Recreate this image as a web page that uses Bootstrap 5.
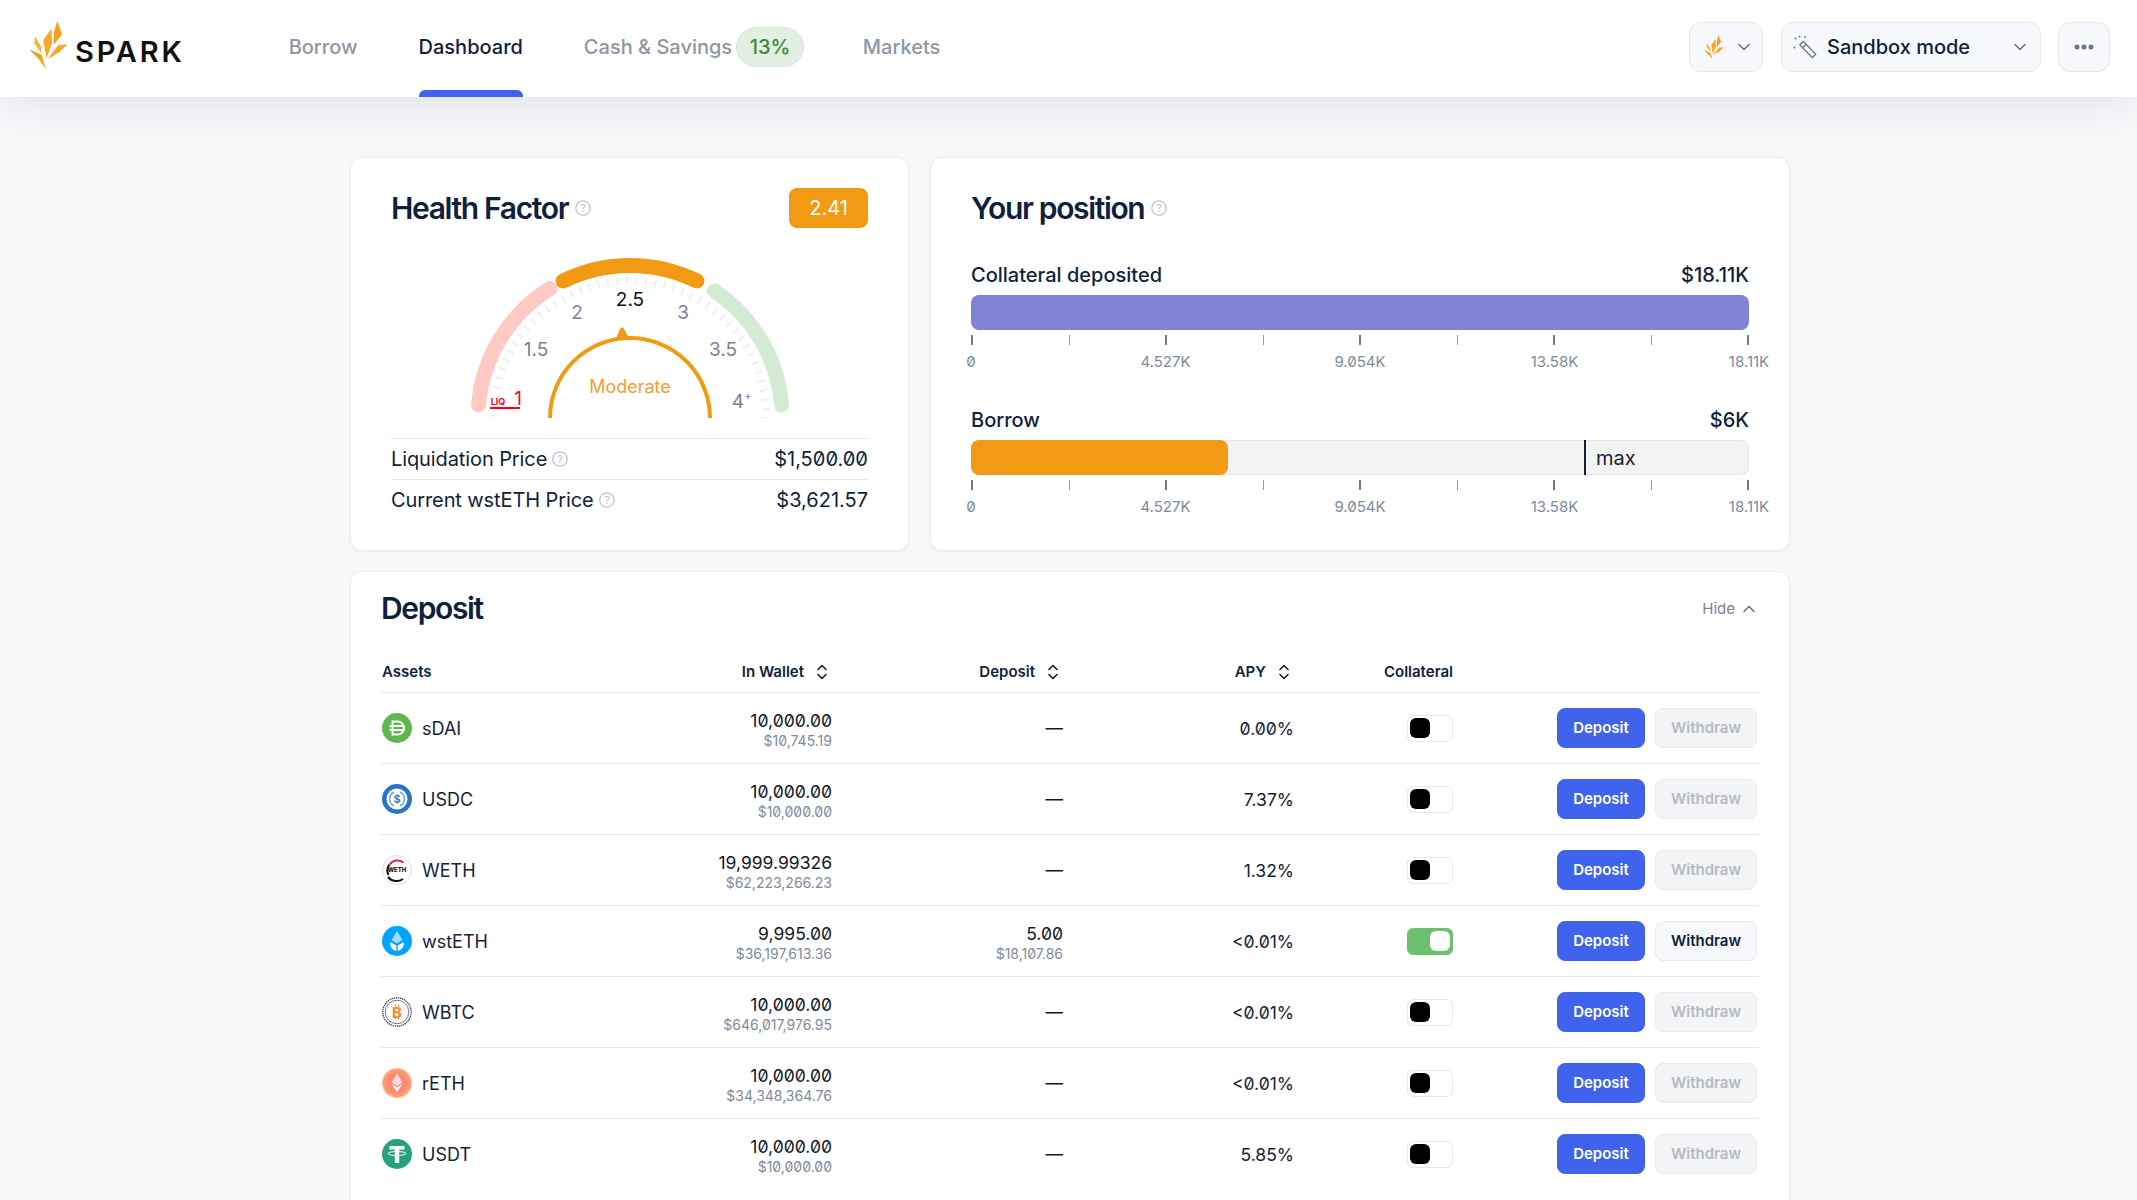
<!DOCTYPE html>
<html lang="en">
<head>
    <meta charset="UTF-8">
    <meta name="viewport" content="width=device-width, initial-scale=1.0">
    <title>Spark - Dashboard</title>
    <link href="https://cdn.jsdelivr.net/npm/bootstrap@5.3.0/dist/css/bootstrap.min.css" rel="stylesheet">
    <style>
        html, body { height: 100%; overflow: hidden; }
        body { background: #f7f8fa; font-family: "Inter", "Liberation Sans", sans-serif; color: #0f1f3d; font-feature-settings: "zero" 1; }

        /* header */
        .top-bar { height: 97px; background: #fff; padding: 0 27px 3px 29px; box-shadow: 0 0 50px rgba(20, 30, 60, .13); position: relative; z-index: 2; }
        .brand-flame { margin-top: -4px; }
        .brand-mark { font-size: 29px; font-weight: 600; letter-spacing: 2.800px; color: #111; margin-left: 7px; line-height: 1; margin-top: 9px; }
        .main-nav { gap: 61px; margin-left: 104px; height: 97px; align-self: flex-start; }
        .main-nav a { font-size: 20px; font-weight: 500; color: #8e97a8; text-decoration: none; position: relative; height: 97px; padding-bottom: 4px; display: flex; align-items: center; }
        .main-nav a.current { color: #0f1f3d; }
        .main-nav a.current::after { content: ""; position: absolute; left: 0; right: 0; bottom: 0; height: 7px; background: #3f63ed; border-radius: 6px 6px 0 0; }
        .rate-pill { height: 40px; padding: 0 12.500px; margin: 0 -2px 0 4px; border-radius: 20px; background: #e1f0e0; border: 1px solid #d6e9d5; color: #3f8a3f; display: flex; align-items: center; }
        .head-btn { height: 50px; background: #f7f8fb; border: 1px solid #e6e7ec; border-radius: 12px; display: flex; align-items: center; color: #0f1f3d; font-size: 20px; font-weight: 500; padding: 0; }
        .head-btn:hover { background: #f7f8fb; border-color: #e6e7ec; }
        .chain-btn { width: 74px; }
        .chain-btn .chain-flame { margin-left: 13px; }
        .chain-btn .chev { margin-left: 13px; }
        .mode-btn { width: 260px; margin-left: 18px; }
        .mode-btn .wand { margin-left: 11px; }
        .mode-btn .mode-text { margin-left: 10px; }
        .mode-btn .chev { margin-right: 14px; }
        .more-btn { width: 52px; margin-left: 17px; }

        /* page */
        .page-wrap { width: 1440px; margin: 60px 0 0 350px; }
        .top-panels { gap: 21px; }
        .panel { background: #fff; border: 1px solid #eceef1; border-radius: 12px; box-shadow: 0 1px 3px rgba(20, 30, 60, .05); }
        .panel-title { font-size: 30px; font-weight: 600; letter-spacing: -1.350px; line-height: 40px; margin: 0; color: #0f1f3d; }
        .title-wrap { gap: 7px; }
        .help-ico { width: 16px; height: 16px; flex: none; }

        /* health factor */
        .health-panel { width: 559px; height: 394px; padding: 30px 40px 0; }
        .hf-pill { width: 79px; height: 40px; border-radius: 8px; background: #f29a14; color: #fff; font-size: 20px; display: flex; align-items: center; justify-content: center; }
        .gauge-svg { display: block; margin: 20px auto 20px; width: 340px; height: 170px; font-family: "Inter", sans-serif; }
        .info-row { height: 41px; border-top: 1px solid #e3e5ea; font-size: 20px; color: #0f1f3d; }
        .info-label { gap: 5px; letter-spacing: -.1px; }

        /* position */
        .position-panel { width: 860px; height: 394px; padding: 30px 40px 0; }
        .bar-head { font-size: 20px; font-weight: 500; line-height: 24px; margin-top: 38px; }
        .bar-head.first { margin-top: 35px; }
        .pos-bar { height: 35px; border-radius: 8px; margin-top: 8px; position: relative; }
        .pos-bar.full { background: #7f85d4; }
        .pos-bar.track { background: #f3f3f3; border: 1px solid #e6e6e6; }
        .pos-fill { height: 35px; margin: -1px 0 0 -1px; background: #f29a14; border-radius: 8px; }
        .max-mark { position: absolute; top: -1px; bottom: -1px; left: 78.9%; width: 2px; background: #0f1f3d; }
        .max-text { position: absolute; left: 80.4%; top: 4px; font-size: 20px; line-height: 26px; color: #1b2433; }
        .tick-row { height: 10px; margin-top: 5px; }
        .tick-row i { width: 2px; background: #6f7892; }
        .tick-row i:nth-child(even) { width: 1px; background: #8f97aa; }
        .label-row { margin-top: 9px; height: 16px; font-size: 15px; line-height: 16px; color: #808a9e; }
        .label-row span { width: 0; display: flex; justify-content: center; white-space: nowrap; }

        /* deposit table */
        .deposit-panel { margin-top: 20px; padding: 16px 30px 60px 30px; }
        .hide-link { font-size: 15px; color: #7a8397; text-decoration: none; margin: 2px 4px 0 0; }
        .asset-tbl { table-layout: fixed; width: 1378px; margin: 26px 0 0; }
        .col-assets { width: 280px; }
        .col-wallet { width: 171px; }
        .col-deposit { width: 231px; }
        .col-apy { width: 231px; }
        .col-coll { width: 159px; }
        .asset-tbl.table > :not(caption) > * > * { padding: 0; vertical-align: middle; background: transparent; border-bottom: 1px solid #e5e6ea; box-shadow: none; }
        .asset-tbl.table > thead > tr > th { height: 38px; font-size: 15px; font-weight: 600; color: #0f1f3d; padding-bottom: 2px; }
        .asset-tbl.table > tbody > tr > td { height: 71px; padding-top: 1px; color: #111827; }
        .asset-tbl.table > tbody > tr:last-child > td { border-bottom: 0; }
        .assets-head { padding-left: 1px; }
        .sort-ico { width: 12px; height: 16px; margin: 0 4px 0 12px; vertical-align: -3px; }
        .asset-ico { width: 30px; height: 30px; margin: 0 10px 0 1px; flex: none; }
        .asset-name { font-size: 18px; color: #16223b; }
        .num-stack { padding-top: 5px; }
        .num-main { font-size: 17.500px; line-height: 20px; color: #111827; }
        .num-sub { font-size: 14px; line-height: 20px; color: #808a9e; }
        .apy-val { font-size: 17.500px; color: #16223b; display: inline-block; padding-top: 2px; }
        .coll-toggle { width: 46px; height: 27px; border: 1px solid #e6e7ea; border-radius: 6px; background: #fff; display: inline-flex; align-items: center; padding: 0 2px; }
        .coll-toggle b { width: 20px; height: 20px; border-radius: 6px; background: #000; display: block; }
        .coll-toggle.on { background: #6cc070; border-color: #6cc070; justify-content: flex-end; }
        .coll-toggle.on b { background: #fff; }
        .act-btn { height: 40px; border-radius: 8px; font-size: 15px; font-weight: 600; padding: 0; line-height: 38px; }
        .act-deposit { width: 88px; background: #3f63ed; border-color: #3f63ed; color: #fff; }
        .act-withdraw { width: 102px; margin: 0 2px 0 10px; background: #f7f8fb; border: 1px solid #e8e9ee; color: #0f1f3d; }
        .act-withdraw:disabled { background: #f3f4f6; border-color: #e9eaee; color: #b5bac5; opacity: 1; }
    </style>
</head>
<body>
    <!-- shared icons -->
    <svg width="0" height="0" class="position-absolute">
        <defs>
            <symbol id="spark-flame" viewBox="87 62 118 146">
                <polygon fill="#f99d1c" points="173,62 187,103 161,135 163,95"/>
                <polygon fill="#fba72b" points="155,85 157,128 140,176 130,120"/>
                <polygon fill="#fbb040" points="105,108 124,142 124,160 103,130"/>
                <polygon fill="#f99d1c" points="87,148 125,165 138,207 118,180"/>
                <polygon fill="#fba72b" points="204,133 176,135 143,178 178,158"/>
            </symbol>
            <symbol id="help" viewBox="0 0 16 16">
                <circle cx="8" cy="8" r="7.2" fill="none" stroke="#bcc2cf" stroke-width="1.3"/>
                <text x="8" y="11.500" text-anchor="middle" font-size="10" fill="#bcc2cf" font-family="Inter, sans-serif">?</text>
            </symbol>
            <symbol id="sort" viewBox="0 0 12 16">
                <path d="M2 5.500 6 1.500l4 4M2 10.500l4 4 4-4" fill="none" stroke="#0f1f3d" stroke-width="1.6" stroke-linecap="round" stroke-linejoin="round"/>
            </symbol>
            <symbol id="chev-down" viewBox="0 0 12 8">
                <path d="M1 1.500l5 5 5-5" fill="none" stroke="#6c7490" stroke-width="1.6" stroke-linecap="round" stroke-linejoin="round"/>
            </symbol>
            <symbol id="tok-sdai" viewBox="0 0 30 30">
                <circle cx="15" cy="15" r="15" fill="#5fb84d"/>
                <path d="M10.500 8.500h5a6.500 6.500 0 0 1 0 13h-5z" fill="none" stroke="#fff" stroke-width="2"/>
                <path d="M7.500 13h15M7.500 17h15" stroke="#fff" stroke-width="1.8"/>
            </symbol>
            <symbol id="tok-usdc" viewBox="0 0 30 30">
                <circle cx="15" cy="15" r="15" fill="#2775ca"/>
                <circle cx="15" cy="15" r="10.500" fill="#fff"/>
                <path d="M12 8.200a7.500 7.500 0 0 0 0 13.600M18 8.200a7.500 7.500 0 0 1 0 13.600" fill="none" stroke="#6ba6e4" stroke-width="1.5"/>
                <text x="15" y="19" text-anchor="middle" font-size="11" font-weight="600" fill="#2775ca" font-family="Inter, sans-serif">$</text>
            </symbol>
            <symbol id="tok-weth" viewBox="0 0 30 30">
                <circle cx="15" cy="15" r="14.500" fill="#fff" stroke="#dcdde0"/>
                <path d="M6.500 20a10 10 0 0 1 1-10.500" fill="none" stroke="#111" stroke-width="2"/>
                <path d="M7.500 9.500a10 10 0 0 1 14-2" fill="none" stroke="#d6246e" stroke-width="2"/>
                <path d="M6 22a11 11 0 0 0 15 2" fill="none" stroke="#111" stroke-width="2"/>
                <text x="15" y="17" text-anchor="middle" font-size="6" font-weight="800" fill="#111" font-family="Inter, sans-serif">WETH</text>
            </symbol>
            <symbol id="tok-wsteth" viewBox="0 0 30 30">
                <circle cx="15" cy="15" r="15" fill="#00a3ff"/>
                <path d="M15 5l5.500 9L15 17.500 9.500 14z" fill="#a6dcff"/>
                <path d="M8.300 16l6 3.600V25a7.500 7.500 0 0 1-6-9zM21.700 16l-6 3.600V25a7.500 7.500 0 0 0 6-9z" fill="#fff"/>
            </symbol>
            <symbol id="tok-wbtc" viewBox="0 0 30 30">
                <circle cx="15" cy="15" r="14.200" fill="#fff" stroke="#34344a" stroke-width="1.2" stroke-dasharray="1.400 .7"/>
                <circle cx="15" cy="15" r="11.800" fill="#fafafa" stroke="#55566a" stroke-width=".8"/>
                <text x="15" y="20.500" text-anchor="middle" font-size="15" font-weight="800" fill="#f09242" font-family="Inter, sans-serif">B</text>
                <path d="M13.500 7.500v2M16.500 7.500v2M13.500 20.500v2M16.500 20.500v2" stroke="#f09242" stroke-width="1.3"/>
            </symbol>
            <symbol id="tok-reth" viewBox="0 0 30 30">
                <circle cx="15" cy="15" r="14.500" fill="#fb9a6f" stroke="#ffc59a" stroke-width="1.2"/>
                <circle cx="15" cy="15" r="10.500" fill="#f98a72"/>
                <path d="M15 5.500l5.500 9.300L15 18l-5.500-3.200z" fill="#ffd9e2"/>
                <path d="M9.800 16.300 15 19.400l5.200-3.100L15 24z" fill="#fff"/>
            </symbol>
            <symbol id="tok-usdt" viewBox="0 0 30 30">
                <circle cx="15" cy="15" r="15" fill="#26a17b"/>
                <path d="M7.500 7h15v3.600h-5.300V24h-4.400V10.600H7.500z" fill="#fff"/>
                <ellipse cx="15" cy="14.500" rx="9" ry="2" fill="none" stroke="#fff" stroke-width="1"/>
            </symbol>
        </defs>
    </svg>

    <nav class="top-bar d-flex align-items-center">
        <a href="#" class="d-flex align-items-center text-decoration-none">
            <svg class="brand-flame" width="39" height="48"><use href="#spark-flame"/></svg>
            <span class="brand-mark">SPARK</span>
        </a>
        <div class="main-nav d-flex">
            <a href="#">Borrow</a>
            <a href="#" class="current">Dashboard</a>
            <a href="#">Cash &amp; Savings <span class="rate-pill">13%</span></a>
            <a href="#">Markets</a>
        </div>
        <div class="ms-auto d-flex align-items-center">
            <button class="btn head-btn chain-btn">
                <svg class="chain-flame" width="22" height="25"><use href="#spark-flame"/></svg>
                <svg class="chev" width="12" height="8"><use href="#chev-down"/></svg>
            </button>
            <button class="btn head-btn mode-btn">
                <svg class="wand" width="24" height="24" viewBox="0 0 24 24" fill="none" stroke="#727a93" stroke-width="1.4" stroke-linejoin="round">
                    <path d="M10.200 6.300l12.500 13-3.400 3.400-12.500-13z"/>
                    <path d="M13.200 9.300l-3.400 3.400"/>
                    <path d="M2.500 3.500h.1M12 2h.1M1.500 12.500h.1M6.500 1.500h.1" stroke-width="2" stroke-linecap="round"/>
                </svg>
                <span class="mode-text">Sandbox mode</span>
                <svg class="chev ms-auto" width="12" height="8"><use href="#chev-down"/></svg>
            </button>
            <button class="btn head-btn more-btn justify-content-center">
                <svg width="20" height="6" viewBox="0 0 20 6"><g fill="#6c7490"><circle cx="3" cy="3" r="2.500"/><circle cx="10" cy="3" r="2.500"/><circle cx="17" cy="3" r="2.500"/></g></svg>
            </button>
        </div>
    </nav>

    <main class="page-wrap">
        <div class="d-flex top-panels">
            <section class="panel health-panel">
                <div class="d-flex justify-content-between align-items-center">
                    <div class="d-flex align-items-center title-wrap">
                        <h2 class="panel-title">Health Factor</h2>
                        <svg class="help-ico"><use href="#help"/></svg>
                    </div>
                    <div class="hf-pill">2.41</div>
                </div>
                <!-- viewBox in page pixels so the arcs are easy to check against the reference -->
                <svg class="gauge-svg" viewBox="460 248 340 170">
                    <circle cx="630" cy="417" r="136" fill="none" stroke="#eeeff1" stroke-width="8" stroke-dasharray="2 7.500"/>
                    <g fill="none" stroke-width="15" stroke-linecap="round">
                        <path d="M478.600 405A151.500 151.500 0 0 1 550 288.600" stroke="#ffc9c4"/>
                        <path d="M563 281A151.500 151.500 0 0 1 697 281" stroke="#f29a14"/>
                        <path d="M714.500 291A151.500 151.500 0 0 1 781.500 405" stroke="#d3ebd3"/>
                    </g>
                    <path d="M550 418A80 80 0 0 1 710 418" fill="none" stroke="#f29a14" stroke-width="4"/>
                    <path d="M615.500 340 620 329q2-3.500 4 0l6 11z" fill="#f29a14"/>
                    <g text-anchor="middle" font-size="19" fill="#7b8194">
                        <text x="577" y="319">2</text>
                        <text x="683" y="319">3</text>
                        <text x="536" y="356">1.5</text>
                        <text x="723" y="356">3.5</text>
                        <text x="738" y="408">4</text>
                        <text x="748" y="400" font-size="11">+</text>
                        <text x="630" y="306" fill="#0b0f19">2.5</text>
                        <text x="630" y="393" font-size="18" fill="#f59e2e">Moderate</text>
                    </g>
                    <text x="518" y="405" text-anchor="middle" font-size="19" fill="#ff0022">1</text>
                    <text x="498" y="404.500" text-anchor="middle" font-size="9" font-weight="700" fill="#ff0022">LIQ</text>
                    <rect x="490" y="407" width="30" height="2" fill="#ff0022"/>
                </svg>
                <div class="info-row d-flex justify-content-between align-items-center">
                    <span class="d-flex align-items-center info-label">Liquidation Price <svg class="help-ico"><use href="#help"/></svg></span>
                    <span>$1,500.00</span>
                </div>
                <div class="info-row d-flex justify-content-between align-items-center">
                    <span class="d-flex align-items-center info-label">Current wstETH Price <svg class="help-ico"><use href="#help"/></svg></span>
                    <span>$3,621.57</span>
                </div>
            </section>

            <section class="panel position-panel">
                <div class="d-flex align-items-center title-wrap">
                    <h2 class="panel-title">Your position</h2>
                    <svg class="help-ico"><use href="#help"/></svg>
                </div>
                <div class="bar-head first d-flex justify-content-between">
                    <span>Collateral deposited</span><span>$18.11K</span>
                </div>
                <div class="pos-bar full"></div>
                <div class="tick-row d-flex justify-content-between"><i></i><i></i><i></i><i></i><i></i><i></i><i></i><i></i><i></i></div>
                <div class="label-row d-flex justify-content-between"><span>0</span><span>4.527K</span><span>9.054K</span><span>13.58K</span><span>18.11K</span></div>

                <div class="bar-head d-flex justify-content-between">
                    <span>Borrow</span><span>$6K</span>
                </div>
                <div class="pos-bar track">
                    <div class="pos-fill" style="width: 33.1%;"></div>
                    <div class="max-mark"></div>
                    <div class="max-text">max</div>
                </div>
                <div class="tick-row d-flex justify-content-between"><i></i><i></i><i></i><i></i><i></i><i></i><i></i><i></i><i></i></div>
                <div class="label-row d-flex justify-content-between"><span>0</span><span>4.527K</span><span>9.054K</span><span>13.58K</span><span>18.11K</span></div>
            </section>
        </div>

        <section class="panel deposit-panel">
            <div class="d-flex justify-content-between align-items-center">
                <h2 class="panel-title">Deposit</h2>
                <a href="#" class="hide-link d-flex align-items-center">Hide
                    <svg class="ms-2" width="12" height="8" viewBox="0 0 12 8"><path d="M1 6.500l5-5 5 5" fill="none" stroke="#6c7490" stroke-width="1.6" stroke-linecap="round" stroke-linejoin="round"/></svg>
                </a>
            </div>
            <table class="table asset-tbl">
                <colgroup><col class="col-assets"><col class="col-wallet"><col class="col-deposit"><col class="col-apy"><col class="col-coll"><col></colgroup>
                <thead>
                    <tr>
                        <th><span class="assets-head">Assets</span></th>
                        <th class="text-end">In Wallet<svg class="sort-ico"><use href="#sort"/></svg></th>
                        <th class="text-end">Deposit<svg class="sort-ico"><use href="#sort"/></svg></th>
                        <th class="text-end">APY<svg class="sort-ico"><use href="#sort"/></svg></th>
                        <th class="text-end">Collateral</th>
                        <th></th>
                    </tr>
                </thead>
                <tbody id="assetRows"></tbody>
            </table>
        </section>
    </main>

    <script src="https://cdn.jsdelivr.net/npm/bootstrap@5.3.0/dist/js/bootstrap.bundle.min.js"></script>
    <script>
        const assets = [
            { name: 'sDAI', icon: 'tok-sdai', wallet: '10,000.00', walletUsd: '$10,745.19', apy: '0.00%' },
            { name: 'USDC', icon: 'tok-usdc', wallet: '10,000.00', walletUsd: '$10,000.00', apy: '7.37%' },
            { name: 'WETH', icon: 'tok-weth', wallet: '19,999.99326', walletUsd: '$62,223,266.23', apy: '1.32%' },
            { name: 'wstETH', icon: 'tok-wsteth', wallet: '9,995.00', walletUsd: '$36,197,613.36', deposit: '5.00', depositUsd: '$18,107.86', apy: '<0.01%', on: true },
            { name: 'WBTC', icon: 'tok-wbtc', wallet: '10,000.00', walletUsd: '$646,017,976.95', apy: '<0.01%' },
            { name: 'rETH', icon: 'tok-reth', wallet: '10,000.00', walletUsd: '$34,348,364.76', apy: '<0.01%' },
            { name: 'USDT', icon: 'tok-usdt', wallet: '10,000.00', walletUsd: '$10,000.00', apy: '5.85%' }
        ];

        const tableBody = document.getElementById('assetRows');
        assets.forEach(asset => {
            const depositCell = asset.deposit
                ? `<div class="num-stack"><div class="num-main">${asset.deposit}</div><div class="num-sub">${asset.depositUsd}</div></div>`
                : '<span class="num-main">—</span>';
            tableBody.innerHTML += `
                <tr>
                    <td><div class="d-flex align-items-center"><svg class="asset-ico"><use href="#${asset.icon}"/></svg><span class="asset-name">${asset.name}</span></div></td>
                    <td class="text-end"><div class="num-stack"><div class="num-main">${asset.wallet}</div><div class="num-sub">${asset.walletUsd}</div></div></td>
                    <td class="text-end">${depositCell}</td>
                    <td class="text-end"><span class="apy-val">${asset.apy.replace('<', '&lt;')}</span></td>
                    <td class="text-end"><span class="coll-toggle align-middle ${asset.on ? 'on' : ''}"><b></b></span></td>
                    <td class="text-end">
                        <button class="btn act-btn act-deposit">Deposit</button><button class="btn act-btn act-withdraw" ${asset.on ? '' : 'disabled'}>Withdraw</button>
                    </td>
                </tr>`;
        });
    </script>
</body>
</html>
